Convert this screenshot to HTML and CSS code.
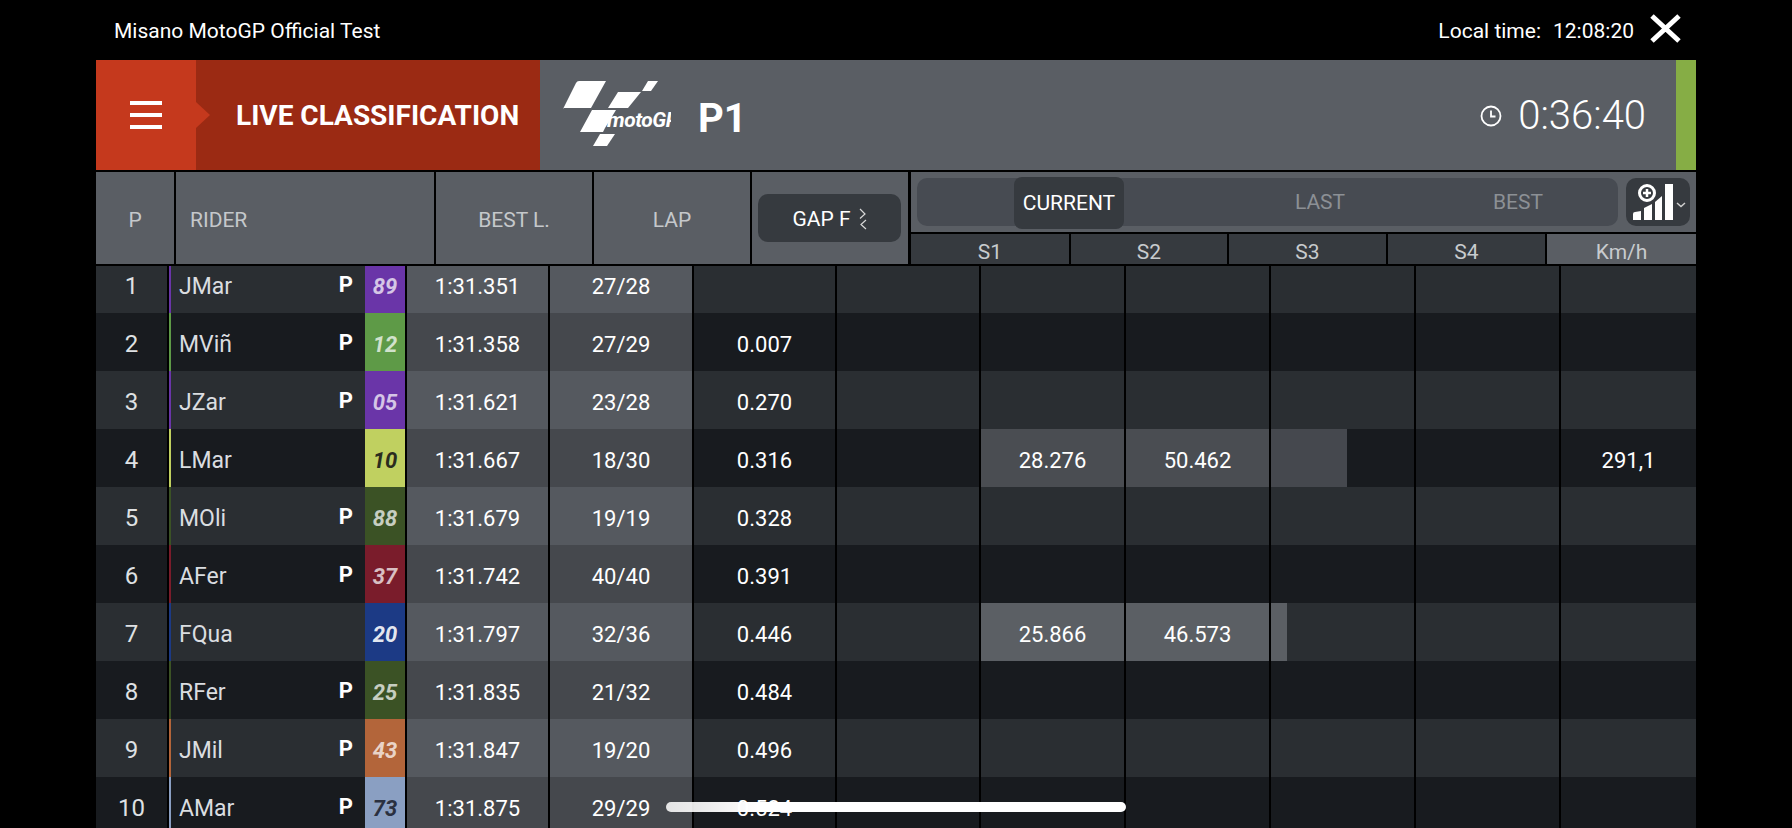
FILE: index.html
```html
<!DOCTYPE html>
<html lang="en">
<head>
<meta charset="utf-8">
<title>Live Classification</title>
<link rel="stylesheet" href="styles.css">
</head>
<body>
<div class="app">
  <div class="topbar">
    <span class="event">Misano MotoGP Official Test</span>
    <span class="local">Local time:</span>
    <span class="time">12:08:20</span>
    <svg class="close" viewBox="0 0 31 29"><path d="M2 2 L29 27 M29 2 L2 27"/></svg>
  </div>
  <div class="hero">
    <div class="menu"><span class="bar"></span><span class="bar"></span><span class="bar"></span></div>
    <div class="title">LIVE CLASSIFICATION</div>
    <div class="session">
      <svg class="logo" viewBox="0 0 110 72">
        <path class="w" d="M2 29 L15 3 Q16 1 18 1 L45 1 L30 28 L2 28 Z"/>
        <path class="w" d="M47 28 L57 12 L80 12 L67 28 Z"/>
        <path class="w" d="M81 11 L87 1 L97 1 L90 11 Z"/>
        <path class="w" d="M19 52 L31 30 L55 30 L44 48 L42 52 Z"/>
        <path class="w" d="M32 66 L39 54 L54 54 L46 66 Z"/>
        <text class="logotext" x="46" y="47">motoGP</text>
      </svg>
      <span class="pnum">P1</span>
      <svg class="clock" viewBox="0 0 22 22"><circle cx="11" cy="11" r="9.5"/><path d="M11 5.5 V11.5 H15.5"/></svg>
      <span class="countdown">0:36:40</span>
    </div>
    <div class="flag"></div>
  </div>
  <div class="heads">
    <div class="hcell hp">P</div>
    <div class="hcell hrider">RIDER</div>
    <div class="hcell hbest">BEST L.</div>
    <div class="hcell hlap">LAP</div>
    <div class="hcell hgap">
      <div class="gapbtn">GAP F
        <svg class="swap" viewBox="0 0 8 22"><path d="M1 1 L6 6 L1 10.500 M7 12 L2 16.500 L7 21"/></svg>
      </div>
    </div>
    <div class="hright">
      <div class="controls">
        <div class="track">
          <div class="seg-on">CURRENT</div>
          <div class="seg-last">LAST</div>
          <div class="seg-best">BEST</div>
        </div>
        <div class="iconbtn">
          <svg viewBox="0 0 64 48">
            <path class="w" d="M7 36 Q7 34 9 34 L15 33 V42 H7 Z"/>
            <path class="w" d="M18 30 L26 26 V42 H18 Z"/>
            <path class="w" d="M29 24 L36 18 V42 H29 Z"/>
            <rect class="w" x="39" y="6" width="8" height="36"/>
            <circle class="plus" cx="21" cy="15" r="7.500"/>
            <path class="plusmark" d="M21 11 V19 M17 15 H25"/>
            <path class="chev" d="M51 25 L55 28.500 L59 25"/>
          </svg>
        </div>
      </div>
      <div class="sectors">
        <div class="scell">S1</div>
        <div class="scell">S2</div>
        <div class="scell">S3</div>
        <div class="scell">S4</div>
        <div class="scell kmh">Km/h</div>
      </div>
    </div>
  </div>
  <div class="board">
    <div class="rows">
      <div class="row odd"><div class="c pos">1</div><div class="c rider purple"><span class="name">JMar</span><span class="pit">P</span></div><div class="c num purple">89</div><div class="c best">1:31.351</div><div class="c lap">27/28</div><div class="c val"></div><div class="c"></div><div class="c"></div><div class="c"></div><div class="c"></div><div class="c"></div><div class="c last"></div></div>
      <div class="row even"><div class="c pos">2</div><div class="c rider green"><span class="name">MViñ</span><span class="pit">P</span></div><div class="c num green">12</div><div class="c best">1:31.358</div><div class="c lap">27/29</div><div class="c val">0.007</div><div class="c"></div><div class="c"></div><div class="c"></div><div class="c"></div><div class="c"></div><div class="c last"></div></div>
      <div class="row odd"><div class="c pos">3</div><div class="c rider purple"><span class="name">JZar</span><span class="pit">P</span></div><div class="c num purple">05</div><div class="c best">1:31.621</div><div class="c lap">23/28</div><div class="c val">0.270</div><div class="c"></div><div class="c"></div><div class="c"></div><div class="c"></div><div class="c"></div><div class="c last"></div></div>
      <div class="row even"><div class="c pos">4</div><div class="c rider lime"><span class="name">LMar</span></div><div class="c num lime">10</div><div class="c best">1:31.667</div><div class="c lap">18/30</div><div class="c val">0.316</div><div class="c"></div><div class="c val lit">28.276</div><div class="c val lit">50.462</div><div class="c"><span class="fill" style="width:76px"></span></div><div class="c"></div><div class="c val last">291,1</div></div>
      <div class="row odd"><div class="c pos">5</div><div class="c rider moss"><span class="name">MOli</span><span class="pit">P</span></div><div class="c num moss">88</div><div class="c best">1:31.679</div><div class="c lap">19/19</div><div class="c val">0.328</div><div class="c"></div><div class="c"></div><div class="c"></div><div class="c"></div><div class="c"></div><div class="c last"></div></div>
      <div class="row even"><div class="c pos">6</div><div class="c rider maroon"><span class="name">AFer</span><span class="pit">P</span></div><div class="c num maroon">37</div><div class="c best">1:31.742</div><div class="c lap">40/40</div><div class="c val">0.391</div><div class="c"></div><div class="c"></div><div class="c"></div><div class="c"></div><div class="c"></div><div class="c last"></div></div>
      <div class="row odd"><div class="c pos">7</div><div class="c rider blue"><span class="name">FQua</span></div><div class="c num blue">20</div><div class="c best">1:31.797</div><div class="c lap">32/36</div><div class="c val">0.446</div><div class="c"></div><div class="c val lit">25.866</div><div class="c val lit">46.573</div><div class="c"><span class="fill" style="width:16px"></span></div><div class="c"></div><div class="c last"></div></div>
      <div class="row even"><div class="c pos">8</div><div class="c rider moss"><span class="name">RFer</span><span class="pit">P</span></div><div class="c num moss">25</div><div class="c best">1:31.835</div><div class="c lap">21/32</div><div class="c val">0.484</div><div class="c"></div><div class="c"></div><div class="c"></div><div class="c"></div><div class="c"></div><div class="c last"></div></div>
      <div class="row odd"><div class="c pos">9</div><div class="c rider orange"><span class="name">JMil</span><span class="pit">P</span></div><div class="c num orange">43</div><div class="c best">1:31.847</div><div class="c lap">19/20</div><div class="c val">0.496</div><div class="c"></div><div class="c"></div><div class="c"></div><div class="c"></div><div class="c"></div><div class="c last"></div></div>
      <div class="row even"><div class="c pos">10</div><div class="c rider steel"><span class="name">AMar</span><span class="pit">P</span></div><div class="c num steel">73</div><div class="c best">1:31.875</div><div class="c lap">29/29</div><div class="c val">0.524</div><div class="c"></div><div class="c"></div><div class="c"></div><div class="c"></div><div class="c"></div><div class="c last"></div></div>
    </div>
  </div>
</div>
<div class="home"></div>
</body>
</html>
```
FILE: styles.css
```css
* { box-sizing: border-box; }
html, body { margin: 0; height: 100%; }
body {
  background: #000;
  color: #fff;
  font-family: Roboto, "Liberation Sans", sans-serif;
  overflow: hidden;
  width: 1792px;
  height: 828px;
  position: relative;
}
.app { width: 1600px; margin-left: 96px; display: flex; flex-direction: column; height: 828px; }

.topbar { height: 60px; flex: none; display: flex; align-items: center; font-size: 21px; padding: 2px 15px 0 18px; }
.event { flex: 1; }
.local { margin-right: 12px; }
.time { margin-right: 16px; }
.close { width: 31px; height: 29px; margin-top: -5px; }
.close path { stroke: #fff; stroke-width: 5; fill: none; }

.hero { height: 110px; flex: none; display: flex; }
.menu { width: 100px; background: #c5391d; display: flex; flex-direction: column; justify-content: center; gap: 8px; padding-left: 34px; position: relative; padding-bottom: 0; }
.menu::after { content: ""; position: absolute; left: 100px; top: 42px; width: 14px; height: 26px; background: #c5391d; clip-path: polygon(0 0, 100% 50%, 0 100%); }
.bar { width: 32px; height: 4px; background: #fff; }
.title { width: 344px; background: #9b2a13; display: flex; align-items: center; padding-left: 40px; font-family: "Liberation Sans Narrow", Roboto, sans-serif; font-weight: 700; font-size: 28px; }
.session { flex: 1; background: #5a5e64; display: flex; align-items: center; position: relative; padding-left: 21px; }
.logo { width: 110px; height: 72px; margin-top: 1px; }
.w { fill: #fff; }
.logotext { font-family: Roboto, sans-serif; font-size: 21px; font-weight: 700; font-style: italic; fill: #fff; letter-spacing: -0.5px; }
.pnum { font-size: 40px; font-weight: 700; margin-left: 27px; margin-top: 7px; flex: 1; }
.clock { width: 22px; height: 22px; margin-right: 16px; margin-top: 2px; }
.clock circle, .clock path { fill: none; stroke: #fff; stroke-width: 1.800; }
.countdown { font-size: 40px; font-weight: 300; margin-right: 30px; }
.flag { width: 20px; background: #86ad45; }

.heads { height: 92px; flex: none; margin-top: 2px; display: flex; }
.hcell { background: #5a5e64; color: #c5c8cb; font-size: 21px; display: flex; align-items: center; justify-content: center; border-right: 2px solid #000; padding-top: 4px; }
.hp { width: 80px; }
.hrider { width: 260px; justify-content: flex-start; padding-left: 14px; }
.hbest, .hlap { width: 158px; }
.hgap { width: 159px; border-right-width: 3px; padding: 0 7px 0 6px; }
.gapbtn { width: 143px; height: 48px; background: #363a3f; border-radius: 10px; color: #fff; display: flex; align-items: center; justify-content: center; gap: 8px; padding-top: 2px; }
.swap { width: 8px; height: 22px; }
.swap path { fill: none; stroke: #d8d8d8; stroke-width: 1.200; }
.hright { width: 785px; display: flex; flex-direction: column; gap: 2px; }
.controls { height: 60px; background: #5a5e64; display: flex; align-items: center; padding-left: 6px; }
.track { width: 701px; height: 48px; background: #474b52; border-radius: 10px; display: flex; align-items: center; padding-left: 97px; color: #8c9095; font-size: 21px; }
.seg-on { width: 110px; height: 52px; margin-top: 2px; border-radius: 8px; background: #363a3f; color: #fff; display: flex; align-items: center; justify-content: center; }
.seg-last { width: 200px; margin-left: 96px; text-align: center; }
.seg-best { width: 196px; text-align: center; }
.iconbtn { width: 64px; height: 48px; margin-left: 8px; background: #363a3f; border-radius: 10px; }
.iconbtn svg { display: block; width: 64px; height: 48px; }
.plus { fill: #363a3f; stroke: #fff; stroke-width: 3; }
.plusmark { stroke: #fff; stroke-width: 2.500; fill: none; }
.chev { stroke: #d0d0d0; stroke-width: 1.500; fill: none; }
.sectors { height: 30px; display: grid; grid-template-columns: 160px 158px 159px 159px 149px; }
.scell { background: #363a3f; color: #c8cbce; font-size: 21px; display: flex; align-items: center; justify-content: center; border-right: 2px solid #000; padding-top: 6px; }
.kmh { background: #5a5e64; border-right: 0; }

.board { flex: 1; margin-top: 2px; overflow: hidden; }
.rows { margin-top: -11px; }
.row { height: 58px; display: grid; grid-template-columns: 73px 196px 42px 143px 144px 143px 144px 145px 145px 145px 145px 135px; }
.c { border-right: 2px solid #000; font-size: 22px; display: flex; align-items: center; justify-content: center; padding-top: 4px; color: #fff; position: relative; }
.last { border-right: 0; }
.odd .c { background: #2a2e32; }
.even .c { background: #181b1f; }
.odd .best, .odd .lap { background: #55595f; }
.even .best, .even .lap { background: #45484d; }
.odd .lit { background: #5b5f64; }
.even .lit { background: #4a4d52; }
.pos { font-size: 24px; color: #dfe1e3; padding-left: 0; }
.rider { --team: #888; border-right: 0; border-left: 2px solid var(--team); justify-content: flex-start; padding-left: 8px; }
.name { flex: 1; font-size: 23px; color: #dadde0; }
.pit { font-weight: 700; font-size: 22px; margin-right: 12px; margin-top: -4px; }
.num { --team: #888; font-weight: 700; font-style: italic; color: rgba(255,255,255,.72); }
.odd .num, .even .num { background: var(--team); }
.purple { --team: #6a35a8; }
.green { --team: #5e9a47; }
.lime { --team: #c0d060; }
.moss { --team: #3b5225; }
.maroon { --team: #7a1c2b; }
.blue { --team: #1c3a85; }
.orange { --team: #b3653a; }
.steel { --team: #8a9fc2; }
.num.lime { color: #2a2c1e; }
.num.steel { color: #2a3040; }
.num.blue { color: rgba(255,255,255,.9); }
.fill { position: absolute; left: 0; top: 0; bottom: 0; }
.odd .fill { background: #5b5f64; }
.even .fill { background: #45484e; }

.home { position: absolute; left: 666px; top: 802px; width: 460px; height: 10px; border-radius: 5px; background: linear-gradient(90deg, rgba(255,255,255,.85), #fff 20%); }
```
